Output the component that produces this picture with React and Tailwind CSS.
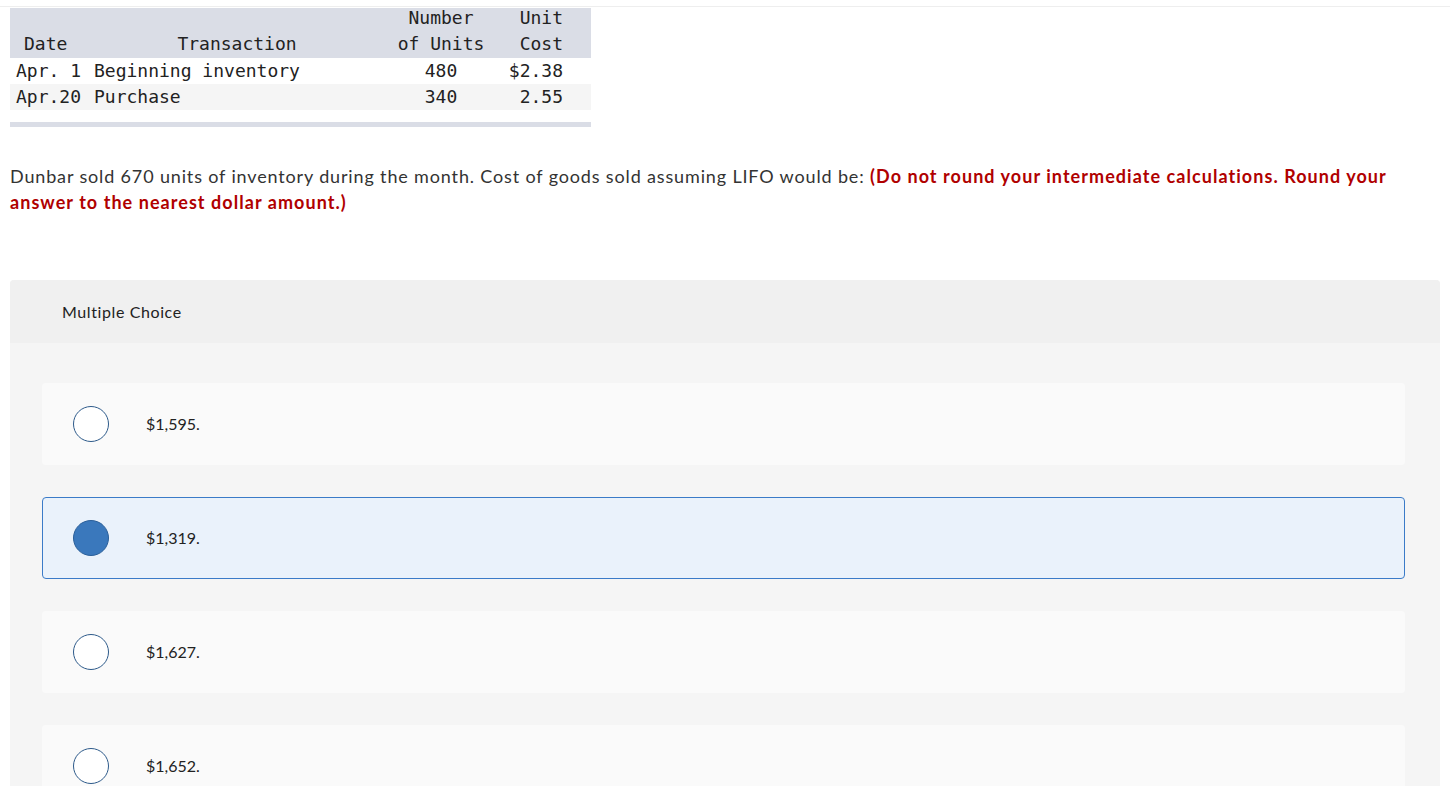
import { useState } from "react"

const rows = [
  { date: "Apr. 1", what: "Beginning inventory", units: "480", cost: "$2.38", bg: "bg-white" },
  { date: "Apr.20", what: "Purchase", units: "340", cost: "2.55", bg: "bg-[#f5f5f5]" },
]

const choices = ["$1,595.", "$1,319.", "$1,627.", "$1,652."]

export default function App() {
  const [picked, setPicked] = useState(1)

  return (
    <div className="min-h-screen bg-white pt-[6px] font-['Lato',sans-serif] overflow-hidden">
      <div className="border-t border-[#eeeeee] pt-[1px]">
        <div className="ml-[10px] w-[581px] font-['DejaVu_Sans_Mono',monospace] text-[18px] text-[#222]">
          <div className="flex h-[50px] items-end bg-[#dadde6] pb-[1px] leading-[26px]">
            <div className="w-[84px] pl-[14px]">Date</div>
            <div className="w-[286px] text-center">Transaction</div>
            <div className="w-[122px] text-center">Number<br />of Units</div>
            <div className="flex-1 pr-[28px] text-right">Unit<br />Cost</div>
          </div>
          {rows.map((r) => (
            <div key={r.date} className={`flex h-[26px] items-center leading-[26px] ${r.bg}`}>
              <div className="w-[84px] pl-[6px]">{r.date}</div>
              <div className="w-[286px]">{r.what}</div>
              <div className="w-[122px] text-center">{r.units}</div>
              <div className="flex-1 pr-[28px] text-right">{r.cost}</div>
            </div>
          ))}
          <div className="mt-[12px] h-[5px] bg-[#dadde6]" />
        </div>
      </div>

      <p className="mt-[36px] px-[10px] text-[18px] leading-[26px] tracking-[0.85px] text-[#333]">
        Dunbar sold 670 units of inventory during the month. Cost of goods sold assuming LIFO would be:{" "}
        <strong className="font-bold tracking-[1.05px] text-[#b00000]">
          (Do not round your intermediate calculations. Round your answer to the nearest dollar amount.)
        </strong>
      </p>

      <div className="mx-[10px] mt-[65px] rounded-t-[4px] bg-[#f5f5f5]">
        <div className="flex h-[63px] items-center rounded-t-[4px] bg-[#f0f0f0] pl-[52px] text-[16px] tracking-[0.6px] text-[#222]">
          Multiple Choice
        </div>
        <div className="flex flex-col gap-[32px] pl-[32px] pr-[35px] pt-[40px] pb-[40px]">
          {choices.map((c, i) => {
            const on = picked === i
            return (
              <button
                key={c}
                type="button"
                onClick={() => setPicked(i)}
                className={`flex h-[82px] items-center rounded-[4px] border text-left ${
                  on ? "border-[#3b7bc8] bg-[#eaf2fb]" : "border-transparent bg-[#fafafa]"
                }`}
              >
                <span
                  className={`ml-[30px] h-[36px] w-[36px] shrink-0 rounded-full border-[1.5px] ${
                    on ? "border-[#2a5f99] bg-[#3a78bc]" : "border-[#2d5a8a] bg-white"
                  }`}
                />
                <span className="ml-[37px] text-[16px] text-[#222]">{c}</span>
              </button>
            )
          })}
        </div>
      </div>
    </div>
  )
}
